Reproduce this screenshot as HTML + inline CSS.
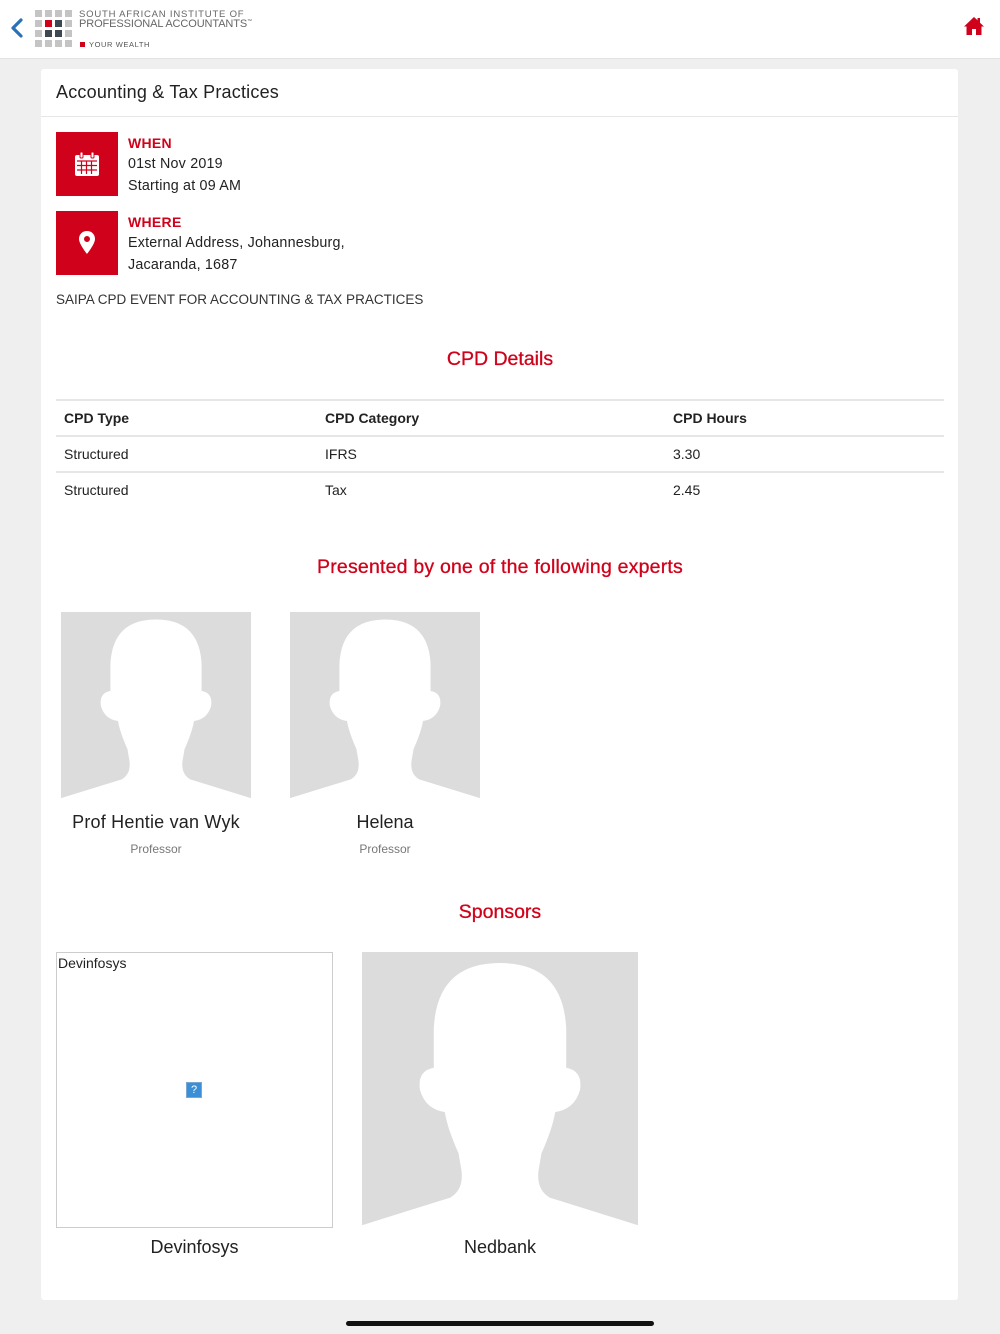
<!DOCTYPE html>
<html><head><meta charset="utf-8"><style>
*{margin:0;padding:0;box-sizing:border-box}
body{width:1000px;height:1334px;background:#efefef;font-family:"Liberation Sans",sans-serif;color:#222;position:relative;overflow:hidden}
.hdr{position:absolute;left:0;top:0;width:1000px;height:59px;background:#fff;border-bottom:1px solid #e2e2e2}
.abs{position:absolute}
.card{position:absolute;left:41px;top:69px;width:917px;height:1231px;background:#fff;border-radius:3px}
.red{color:#d0021b}
.t{position:absolute;white-space:nowrap}
.box{position:absolute;width:62px;height:64px;background:#d0021b}
.cell{position:absolute;font-size:14px;color:#222}
.hr{position:absolute;left:56px;width:888px;height:2px;background:#e6e6e6}
.pic{position:absolute;background:#dcdcdc}
.pic svg{position:absolute;left:0;top:0;width:100%;height:100%}
.b14{font-size:14.3px;letter-spacing:.2px}
.h{font-size:19.5px;-webkit-text-stroke:.3px #d0021b}
</style></head><body>
<div class="hdr">
<svg class="abs" style="left:10px;top:18px" width="14" height="20" viewBox="0 0 14 20"><path d="M11 2 L3 10 L11 18" stroke="#2a72b5" stroke-width="3.2" fill="none" stroke-linecap="round" stroke-linejoin="round"/></svg>
<svg class="abs" style="left:35px;top:10px" width="40" height="38" viewBox="0 0 40 38">
<g fill="#c4c4c4">
<rect x="0" y="0" width="7" height="7"/><rect x="10" y="0" width="7" height="7"/><rect x="20" y="0" width="7" height="7"/><rect x="30" y="0" width="7" height="7"/>
<rect x="0" y="10" width="7" height="7"/><rect x="30" y="10" width="7" height="7"/>
<rect x="0" y="20" width="7" height="7"/><rect x="30" y="20" width="7" height="7"/>
<rect x="0" y="30" width="7" height="7"/><rect x="10" y="30" width="7" height="7"/><rect x="20" y="30" width="7" height="7"/><rect x="30" y="30" width="7" height="7"/>
</g>
<rect x="10" y="10" width="7" height="7" fill="#d0021b"/><rect x="20" y="10" width="7" height="7" fill="#3d4852"/>
<rect x="10" y="20" width="7" height="7" fill="#3d4852"/><rect x="20" y="20" width="7" height="7" fill="#3d4852"/>
</svg>
<div class="t" style="left:79px;top:9px;font-size:9.5px;letter-spacing:.8px;color:#666">SOUTH AFRICAN INSTITUTE OF</div>
<div class="t" style="left:79px;top:18px;font-size:11px;color:#666;letter-spacing:-.1px">PROFESSIONAL ACCOUNTANTS<sup style="font-size:5px">™</sup></div>
<div class="abs" style="left:80px;top:42px;width:5px;height:5px;background:#d0021b"></div>
<div class="t" style="left:89px;top:40px;font-size:7.5px;letter-spacing:.6px;color:#555">YOUR WEALTH</div>
<svg class="abs" style="left:963px;top:16px" width="22" height="20" viewBox="0 0 22 20"><path d="M11 1 L1 10.5 L3.5 10.5 L3.5 19 L9 19 L9 13 L13 13 L13 19 L18.5 19 L18.5 10.5 L21 10.5 L17 6.7 L17 2 L14.5 2 L14.5 4.3 Z" fill="#d0021b"/></svg>
</div>
<div class="card"></div>
<div class="t" style="left:56px;top:82px;font-size:18px;color:#222;letter-spacing:.2px">Accounting &amp; Tax Practices</div>
<div class="abs" style="left:41px;top:116px;width:917px;height:1px;background:#e6e6e6"></div>
<div class="box" style="left:56px;top:132px"><svg class="abs" style="left:18px;top:19px" width="26" height="26" viewBox="0 0 26 26"><rect x="1" y="4" width="24" height="21" rx="2" fill="#fff"/><rect x="6" y="1" width="3" height="6" rx="1" fill="#fff" stroke="#d0021b" stroke-width="1"/><rect x="17" y="1" width="3" height="6" rx="1" fill="#fff" stroke="#d0021b" stroke-width="1"/><g stroke="#d0021b" stroke-width="1.2"><path d="M3 10H23M3 14.5H23M3 19H23M7.5 10V23M12.5 10V23M17.5 10V23"/></g></svg></div>
<div class="t red" style="left:128px;top:135px;font-size:14px;font-weight:bold;letter-spacing:.3px">WHEN</div>
<div class="t b14" style="left:128px;top:156px">01st Nov 2019</div>
<div class="t b14" style="left:128px;top:178px">Starting at 09 AM</div>
<div class="box" style="left:56px;top:211px"><svg class="abs" style="left:22px;top:20px" width="18" height="24" viewBox="0 0 18 24"><path d="M9 0C4 0 1 3.7 1 8 C1 13 9 23 9 23 C9 23 17 13 17 8 C17 3.7 14 0 9 0Z M9 5 A3 3 0 1 1 9 11 A3 3 0 1 1 9 5Z" fill="#fff" fill-rule="evenodd"/></svg></div>
<div class="t red" style="left:128px;top:214px;font-size:14px;font-weight:bold;letter-spacing:.3px">WHERE</div>
<div class="t b14" style="left:128px;top:235px">External Address, Johannesburg,</div>
<div class="t b14" style="left:128px;top:257px">Jacaranda, 1687</div>
<div class="t" style="left:56px;top:292px;font-size:13.5px;color:#333">SAIPA CPD EVENT FOR ACCOUNTING &amp; TAX PRACTICES</div>
<div class="t red h" style="left:0;width:1000px;text-align:center;top:348px">CPD Details</div>
<div class="hr" style="top:399px"></div>
<div class="cell" style="left:64px;top:410px;font-weight:bold">CPD Type</div>
<div class="cell" style="left:325px;top:410px;font-weight:bold">CPD Category</div>
<div class="cell" style="left:673px;top:410px;font-weight:bold">CPD Hours</div>
<div class="hr" style="top:435px"></div>
<div class="cell" style="left:64px;top:446px">Structured</div>
<div class="cell" style="left:325px;top:446px">IFRS</div>
<div class="cell" style="left:673px;top:446px">3.30</div>
<div class="hr" style="top:471px"></div>
<div class="cell" style="left:64px;top:482px">Structured</div>
<div class="cell" style="left:325px;top:482px">Tax</div>
<div class="cell" style="left:673px;top:482px">2.45</div>
<div class="t red h" style="left:0;width:1000px;text-align:center;top:556px;letter-spacing:.2px">Presented by one of the following experts</div>
<div class="pic" style="left:61px;top:612px;width:190px;height:188px"><svg viewBox="0 0 100 100" preserveAspectRatio="none"><path d="M0 100 L0 99 L32 89 Q37 86 36 79 L35 73 Q31 64 30 58 Q23 57 21 50 Q20 43 26 42 L26 28 Q27 4 50 4 Q73 4 74 28 L74 42 Q80 43 79 50 Q77 57 70 58 Q69 64 65 73 L64 79 Q63 86 68 89 L100 99 L100 100 Z" fill="#fff"/></svg></div>
<div class="pic" style="left:290px;top:612px;width:190px;height:188px"><svg viewBox="0 0 100 100" preserveAspectRatio="none"><path d="M0 100 L0 99 L32 89 Q37 86 36 79 L35 73 Q31 64 30 58 Q23 57 21 50 Q20 43 26 42 L26 28 Q27 4 50 4 Q73 4 74 28 L74 42 Q80 43 79 50 Q77 57 70 58 Q69 64 65 73 L64 79 Q63 86 68 89 L100 99 L100 100 Z" fill="#fff"/></svg></div>
<div class="t" style="left:61px;width:190px;text-align:center;top:812px;font-size:18px;letter-spacing:.2px">Prof Hentie van Wyk</div>
<div class="t" style="left:61px;width:190px;text-align:center;top:842px;font-size:12px;color:#777">Professor</div>
<div class="t" style="left:290px;width:190px;text-align:center;top:812px;font-size:18px">Helena</div>
<div class="t" style="left:290px;width:190px;text-align:center;top:842px;font-size:12px;color:#777">Professor</div>
<div class="t red h" style="left:0;width:1000px;text-align:center;top:901px">Sponsors</div>
<div class="abs" style="left:56px;top:952px;width:277px;height:276px;border:1px solid #ccc"></div>
<div class="t" style="left:58px;top:955px;font-size:14px">Devinfosys</div>
<div class="abs" style="left:186px;top:1082px;width:16px;height:16px;border:1px solid #7aa7d0;background:#3a8fd6;color:#fff;font-size:11px;text-align:center;line-height:14px">?</div>
<div class="pic" style="left:362px;top:952px;width:276px;height:276px"><svg viewBox="0 0 100 100" preserveAspectRatio="none"><path d="M0 100 L0 99 L32 89 Q37 86 36 79 L35 73 Q31 64 30 58 Q23 57 21 50 Q20 43 26 42 L26 28 Q27 4 50 4 Q73 4 74 28 L74 42 Q80 43 79 50 Q77 57 70 58 Q69 64 65 73 L64 79 Q63 86 68 89 L100 99 L100 100 Z" fill="#fff"/></svg></div>
<div class="t" style="left:56px;width:277px;text-align:center;top:1237px;font-size:18px">Devinfosys</div>
<div class="t" style="left:362px;width:276px;text-align:center;top:1237px;font-size:18px">Nedbank</div>
<div class="abs" style="left:346px;top:1321px;width:308px;height:5px;border-radius:3px;background:#111"></div>
</body></html>
